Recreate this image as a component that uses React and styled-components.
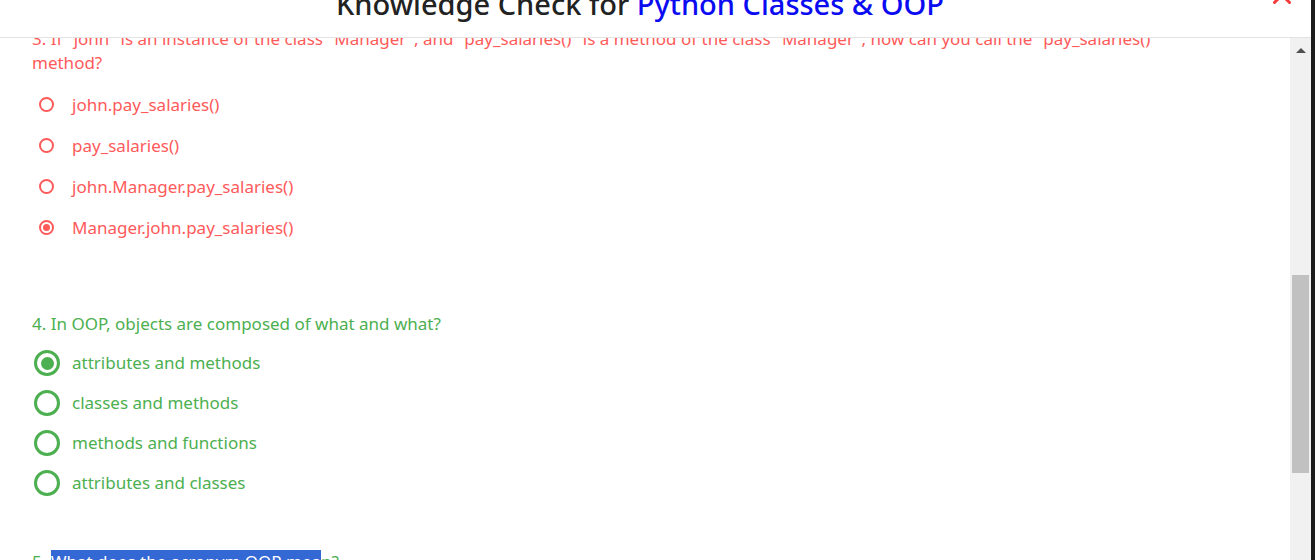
import React, { useLayoutEffect, useRef } from 'react';
import styled, { createGlobalStyle } from 'styled-components';

const GlobalStyle = createGlobalStyle`
  html, body {
    margin: 0;
    padding: 0;
    height: 100%;
    overflow: hidden;
    background: #fff;
  }
  #root { height: 100%; }
  body {
    font-family: "Noto Sans", "Open Sans", sans-serif;
  }
  * { box-sizing: border-box; }
`

const tones = {
    wrong: '#ff5a5a',
    right: '#4caf50',
}

const quiz = [
    {
        num: 3,
        text: 'If "john" is an instance of the class "Manager", and "pay_salaries()" is a method of the class "Manager", how can you call the "pay_salaries()" method?',
        tone: 'wrong',
        kind: 'small',
        picked: 3,
        lead: 9,
        rowH: 41,
        space: 64,
        options: ['john.pay_salaries()', 'pay_salaries()', 'john.Manager.pay_salaries()', 'Manager.john.pay_salaries()'],
    },
    {
        num: 4,
        text: 'In OOP, objects are composed of what and what?',
        tone: 'right',
        kind: 'big',
        picked: 0,
        lead: 7,
        rowH: 40,
        space: 47,
        options: ['attributes and methods', 'classes and methods', 'methods and functions', 'attributes and classes'],
    },
]

const radioKinds = {
    small: { size: 15, stroke: 2, dot: 7, inset: 7, gap: 18 },
    big: { size: 26, stroke: 3, dot: 13, inset: 2, gap: 12 },
}

function Radio({ kind, checked }) {
    const k = radioKinds[kind]
    return (
        <Ring $size={k.size} $stroke={k.stroke} $inset={k.inset} $gap={k.gap}>
            {checked && <Dot $size={k.dot} />}
        </Ring>
    )
}

function Question({ q }) {
    return (
        <Block $tone={tones[q.tone]} $space={q.space}>
            <QText $lead={q.lead}>{q.num}. {q.text}</QText>
            {q.options.map((opt, i) => (
                <OptRow key={opt} $h={q.rowH}>
                    <Radio kind={q.kind} checked={i === q.picked} />
                    <OptLabel>{opt}</OptLabel>
                </OptRow>
            ))}
        </Block>
    )
}

function App() {
    const scroller = useRef()

    useLayoutEffect(() => {
        if (scroller.current) scroller.current.scrollTop = 31
    }, [])

    return (
        <Page>
            <GlobalStyle />
            <Modal>
                <Header>
                    <Title>
                        Knowledge Check for <Topic>Python Classes &amp; OOP</Topic>
                    </Title>
                    <CloseBtn aria-label="close">
                        <svg width="20" height="20" viewBox="0 0 20 20">
                            <path d="M2.5 2.5 L17.5 17.5 M17.5 2.5 L2.5 17.5" stroke="#f23b3b" strokeWidth="3" strokeLinecap="round" fill="none" />
                        </svg>
                    </CloseBtn>
                </Header>
                <Body>
                    <Viewport ref={scroller}>
                        <Content>
                            {quiz.map((q) => (
                                <Question key={q.num} q={q} />
                            ))}
                            <Block $tone={tones.right} $space={0}>
                                <QText $lead={0}>
                                    5. <Selected>What does the acronym OOP mea</Selected>n?
                                </QText>
                            </Block>
                        </Content>
                    </Viewport>
                    <Track>
                        <ArrowBtn><ArrowUp /></ArrowBtn>
                        <Thumb $offset={213} $size={198} />
                    </Track>
                </Body>
            </Modal>
        </Page>
    )
}

const Page = styled.div`
    display: flex;
    height: 560px;
    background: #1c1c1c;
    overflow: hidden;
`

const Modal = styled.div`
    flex: 1;
    display: flex;
    flex-direction: column;
    margin-right: 4px;
    background: #fff;
    min-width: 0;
`

const Header = styled.div`
    flex: none;
    height: 38px;
    display: flex;
    align-items: flex-end;
    padding: 0 19px 19px 8px;
    border-bottom: 1px solid #e3e3e3;
    background: #fff;
    position: relative;
    z-index: 1;
`

const Title = styled.h2`
    flex: 1;
    margin: 0;
    text-align: center;
    font-size: 29px;
    line-height: 29px;
    font-weight: 500;
    color: #222;
    white-space: nowrap;
`

const Topic = styled.span`
    color: #0b0bf2;
`

const CloseBtn = styled.button`
    flex: none;
    border: 0;
    padding: 0;
    background: none;
    display: flex;
    margin-bottom: 13px;
    cursor: pointer;
`

const Body = styled.div`
    flex: 1;
    display: flex;
    min-height: 0;
`

const Viewport = styled.div`
    flex: 1;
    overflow: hidden;
    padding: 0 68px 0 32px;
`

const Content = styled.div`
    padding: 20px 0 60px;
`

const Block = styled.div`
    color: ${(p) => p.$tone};
    margin-bottom: ${(p) => p.$space}px;
`

const QText = styled.p`
    margin: 0 0 ${(p) => p.$lead}px;
    font-size: 17px;
    line-height: 24px;
`

const OptRow = styled.label`
    display: flex;
    align-items: center;
    height: ${(p) => p.$h}px;
    cursor: pointer;
`

const Ring = styled.span`
    flex: none;
    width: ${(p) => p.$size}px;
    height: ${(p) => p.$size}px;
    margin-left: ${(p) => p.$inset}px;
    margin-right: ${(p) => p.$gap}px;
    border: ${(p) => p.$stroke}px solid currentColor;
    border-radius: 50%;
    display: flex;
    align-items: center;
    justify-content: center;
`

const Dot = styled.span`
    width: ${(p) => p.$size}px;
    height: ${(p) => p.$size}px;
    border-radius: 50%;
    background: currentColor;
`

const OptLabel = styled.span`
    font-size: 17px;
    line-height: 24px;
`

const Selected = styled.span`
    background: #3468d4;
    color: #fff;
`

const Track = styled.div`
    flex: none;
    width: 21px;
    background: #f1f1f1;
    display: flex;
    flex-direction: column;
    align-items: center;
`

const ArrowBtn = styled.div`
    height: 24px;
    width: 100%;
    display: flex;
    align-items: center;
    justify-content: center;
`

const ArrowUp = styled.span`
    width: 0;
    height: 0;
    border-left: 5px solid transparent;
    border-right: 5px solid transparent;
    border-bottom: 5px solid #505050;
`

const Thumb = styled.div`
    width: 17px;
    margin-top: ${(p) => p.$offset}px;
    height: ${(p) => p.$size}px;
    background: #c1c1c1;
`

export default App;
